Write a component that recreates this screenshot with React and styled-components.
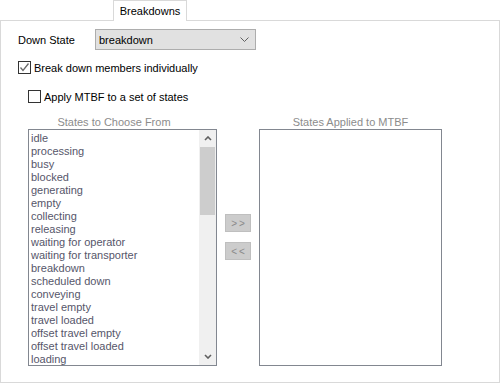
import React from "react";
import styled, { createGlobalStyle } from "styled-components";

const Global = createGlobalStyle`
  html, body { margin: 0; padding: 0; background: #ffffff; }
  body { font-family: "Liberation Sans", Arial, sans-serif; font-size: 11px; color: #000; }
`;

const Root = styled.div`
  width: 501px;
  height: 383px;
  display: flex;
  flex-direction: column;
  background: #fff;
`;

const TabStrip = styled.div`
  height: 20px;
  display: flex;
  align-items: flex-end;
  padding-left: 113px;
`;

const Tab = styled.div`
  position: relative;
  z-index: 1;
  width: 72px;
  height: 19px;
  margin-bottom: -1px;
  border: 1px solid #d9d9d9;
  border-bottom: none;
  background: #fff;
  display: flex;
  align-items: center;
  justify-content: center;
  padding-bottom: 1px;
  box-sizing: content-box;
`;

const Panel = styled.div`
  width: 498px;
  height: 361px;
  border: 1px solid #d9d9d9;
  display: flex;
  flex-direction: column;
`;

const FieldRow = styled.div`
  display: flex;
  align-items: center;
  margin-top: 8px;
  padding-left: 17px;
  height: 21px;
`;

const FieldLabel = styled.span`
  width: 77px;
`;

const Select = styled.div`
  width: 150px;
  height: 19px;
  border: 1px solid #adadad;
  background: #e1e1e1;
  display: flex;
  align-items: center;
  justify-content: space-between;
  padding: 0 6px 0 3px;
  box-sizing: content-box;
`;

const CheckRow = styled.label`
  display: flex;
  align-items: center;
  height: 13px;
  margin-top: ${(p) => p.$top}px;
  padding-left: ${(p) => p.$indent}px;
  gap: 3px;
`;

const Box = styled.span`
  width: 11px;
  height: 11px;
  border: 1px solid #333;
  background: #fff;
  display: flex;
  align-items: center;
  justify-content: center;
`;

const ListsRow = styled.div`
  display: flex;
  margin-top: 13px;
  padding-left: 27px;
`;

const ListColumn = styled.div`
  display: flex;
  flex-direction: column;
  width: ${(p) => p.$width}px;
`;

const ListHeader = styled.div`
  height: 13px;
  line-height: 13px;
  color: #8c8c8c;
  text-align: center;
  padding-right: ${(p) => p.$pad || 0}px;
`;

const ListBox = styled.div`
  height: 235px;
  border: 1px solid #828790;
  background: #fff;
  display: flex;
  overflow: hidden;
`;

const Items = styled.div`
  flex: 1;
  padding: 2px 0 0 2px;
  color: #56566a;
  line-height: 13px;
  overflow: hidden;
`;

const Item = styled.div`
  height: 13px;
  white-space: nowrap;
`;

const ScrollBar = styled.div`
  width: 17px;
  background: #f0f0f0;
  display: flex;
  flex-direction: column;
  align-items: center;
`;

const ArrowBtn = styled.div`
  height: 17px;
  width: 17px;
  display: flex;
  align-items: center;
  justify-content: center;
`;

const Track = styled.div`
  flex: 1;
  width: 15px;
`;

const Thumb = styled.div`
  width: 15px;
  height: 68px;
  background: #cdcdcd;
`;

const ButtonColumn = styled.div`
  display: flex;
  flex-direction: column;
  gap: 10px;
  margin: 98px 8px 0 8px;
`;

const MoveButton = styled.div`
  width: 24px;
  height: 16px;
  border: 1px solid #bfbfbf;
  background: #cccccc;
  color: #8a8a8a;
  display: flex;
  align-items: center;
  justify-content: center;
  letter-spacing: 2px;
  padding-left: 2px;
  box-sizing: content-box;
  width: 22px;
  font-size: 10px;
`;

const states = [
  "idle",
  "processing",
  "busy",
  "blocked",
  "generating",
  "empty",
  "collecting",
  "releasing",
  "waiting for operator",
  "waiting for transporter",
  "breakdown",
  "scheduled down",
  "conveying",
  "travel empty",
  "travel loaded",
  "offset travel empty",
  "offset travel loaded",
  "loading",
];

const Chevron = ({ up }) => (
  <svg width="8" height="5" viewBox="0 0 8 5">
    <polyline
      points={up ? "1,4 4,1 7,4" : "1,1 4,4 7,1"}
      fill="none"
      stroke="#5f5f5f"
      strokeWidth="1.6"
    />
  </svg>
);

export default function App() {
  return (
    <Root>
      <Global />
      <TabStrip>
        <Tab>Breakdowns</Tab>
      </TabStrip>
      <Panel>
        <FieldRow>
          <FieldLabel>Down State</FieldLabel>
          <Select>
            <span>breakdown</span>
            <svg width="9" height="5" viewBox="0 0 9 5">
              <polyline points="0.5,0.5 4.5,4.5 8.5,0.5" fill="none" stroke="#606060" strokeWidth="1" />
            </svg>
          </Select>
        </FieldRow>
        <CheckRow $top={11} $indent={17}>
          <Box>
            <svg width="11" height="11" viewBox="0 0 11 11">
              <polyline points="1.5,5.5 4,8.5 9.5,1.5" fill="none" stroke="#6a6a6a" strokeWidth="1.3" />
            </svg>
          </Box>
          <span>Break down members individually</span>
        </CheckRow>
        <CheckRow $top={16} $indent={27}>
          <Box />
          <span>Apply MTBF to a set of states</span>
        </CheckRow>
        <ListsRow>
          <ListColumn $width={189}>
            <ListHeader $pad={17}>States to Choose From</ListHeader>
            <ListBox>
              <Items>
                {states.map((s) => (
                  <Item key={s}>{s}</Item>
                ))}
              </Items>
              <ScrollBar>
                <ArrowBtn>
                  <Chevron up />
                </ArrowBtn>
                <Track>
                  <Thumb />
                </Track>
                <ArrowBtn>
                  <Chevron />
                </ArrowBtn>
              </ScrollBar>
            </ListBox>
          </ListColumn>
          <ButtonColumn>
            <MoveButton>&gt;&gt;</MoveButton>
            <MoveButton>&lt;&lt;</MoveButton>
          </ButtonColumn>
          <ListColumn $width={183}>
            <ListHeader>States Applied to MTBF</ListHeader>
            <ListBox />
          </ListColumn>
        </ListsRow>
      </Panel>
    </Root>
  );
}
